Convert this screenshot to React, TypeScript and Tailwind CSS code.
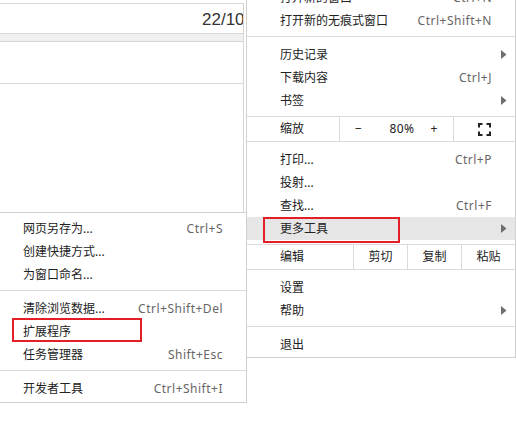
import React from 'react';

type Item = { label: string; shortcut?: string; arrow?: boolean; active?: boolean };

const Arrow: React.FC = () => (
  <svg width="6" height="9" viewBox="0 0 6 9" className="absolute right-[8px] top-[7px]">
    <path d="M0 0 L5.5 4.5 L0 9 Z" fill="#6e6e6e" />
  </svg>
);

const Row: React.FC<{ item: Item; padL: string; padR: string }> = ({ item, padL, padR }) => (
  <div
    className={`relative flex h-[23px] items-center justify-between ${padL} ${padR} ${
      item.active ? 'bg-[#e6e6e6]' : ''
    }`}
  >
    <span className="text-[#222]">{item.label}</span>
    {item.shortcut && <span className="tracking-[0.5px] text-[#666]">{item.shortcut}</span>}
    {item.arrow && <Arrow />}
  </div>
);

const Sep: React.FC = () => (
  <div className="pt-[4px] pb-[6px]">
    <div className="h-px bg-[#dadada]" />
  </div>
);

const FullscreenIcon: React.FC = () => (
  <svg width="13" height="13" viewBox="0 0 13 13" fill="none" stroke="#222" strokeWidth="2">
    <path d="M1 4.5V1h3.5M8.5 1H12v3.5M12 8.5V12H8.5M4.5 12H1V8.5" />
  </svg>
);

const App: React.FC = () => {
  const pl = 'pl-[33px]';
  const pr = 'pr-[23px]';
  const spl = 'pl-[23px]';

  return (
    <div
      className="relative h-[439px] w-[516px] overflow-hidden bg-white text-[12px]"
      style={{ fontFamily: '"Noto Sans", "Noto Sans CJK SC", sans-serif' }}
    >
      {/* page behind the menus */}
      <div className="mt-[3px] h-[240px] w-[244px] border-r border-t border-[#d6d6d6]">
        <div
          className="h-[29px] overflow-hidden whitespace-nowrap pl-[202px] pt-[7px] text-[17px] leading-none text-[#333]"
          style={{ fontFamily: '"Liberation Sans", Arial, sans-serif' }}
        >
          22/10/2020
        </div>
        <div className="h-[9px] border-y border-[#d6d6d6] bg-[#f0f0f0]" />
        <div className="h-[42px] border-b border-[#d6d6d6]" />
      </div>

      {/* main menu */}
      <div className="absolute left-[246px] top-[-19px] w-[270px] border border-[#d0d0d0] bg-white pb-[1px] pt-[4px]">
        <Row item={{ label: '打开新的窗口', shortcut: 'Ctrl+N' }} padL={pl} padR={pr} />
        <Row item={{ label: '打开新的无痕式窗口', shortcut: 'Ctrl+Shift+N' }} padL={pl} padR={pr} />
        <Sep />
        <Row item={{ label: '历史记录', arrow: true }} padL={pl} padR={pr} />
        <Row item={{ label: '下载内容', shortcut: 'Ctrl+J' }} padL={pl} padR={pr} />
        <Row item={{ label: '书签', arrow: true }} padL={pl} padR={pr} />
        <div className="mt-[4px] mb-[6px] flex h-[26px] border-y border-[#dadada]">
          <div className={`flex w-[92px] items-center ${pl} text-[#222]`}>缩放</div>
          <div className="flex w-[114px] items-center border-l border-[#dadada] tracking-[0.5px] text-[#222]">
            <span className="ml-[15px]">−</span>
            <span className="ml-[27px]">80%</span>
            <span className="ml-[16px]">+</span>
          </div>
          <div className="flex flex-1 items-center justify-center border-l border-[#dadada]">
            <FullscreenIcon />
          </div>
        </div>
        <Row item={{ label: '打印...', shortcut: 'Ctrl+P' }} padL={pl} padR={pr} />
        <Row item={{ label: '投射...' }} padL={pl} padR={pr} />
        <Row item={{ label: '查找...', shortcut: 'Ctrl+F' }} padL={pl} padR={pr} />
        <Row item={{ label: '更多工具', arrow: true, active: true }} padL={pl} padR={pr} />
        <div className="mt-[4px] mb-[6px] flex h-[26px] border-y border-[#dadada] text-[#222]">
          <div className={`flex w-[106px] items-center ${pl}`}>编辑</div>
          <div className="flex w-[54px] items-center justify-center border-l border-[#dadada]">剪切</div>
          <div className="flex w-[54px] items-center justify-center border-l border-[#dadada]">复制</div>
          <div className="flex flex-1 items-center justify-center border-l border-[#dadada]">粘贴</div>
        </div>
        <Row item={{ label: '设置' }} padL={pl} padR={pr} />
        <Row item={{ label: '帮助', arrow: true }} padL={pl} padR={pr} />
        <Sep />
        <Row item={{ label: '退出' }} padL={pl} padR={pr} />
      </div>

      {/* more tools submenu */}
      <div className="absolute left-[-1px] top-[212px] w-[248px] border border-[#d0d0d0] bg-white pb-[2px] pt-[4px]">
        <Row item={{ label: '网页另存为...', shortcut: 'Ctrl+S' }} padL={spl} padR={pr} />
        <Row item={{ label: '创建快捷方式...' }} padL={spl} padR={pr} />
        <Row item={{ label: '为窗口命名...' }} padL={spl} padR={pr} />
        <Sep />
        <Row item={{ label: '清除浏览数据...', shortcut: 'Ctrl+Shift+Del' }} padL={spl} padR={pr} />
        <Row item={{ label: '扩展程序' }} padL={spl} padR={pr} />
        <Row item={{ label: '任务管理器', shortcut: 'Shift+Esc' }} padL={spl} padR={pr} />
        <Sep />
        <Row item={{ label: '开发者工具', shortcut: 'Ctrl+Shift+I' }} padL={spl} padR={pr} />
      </div>

      {/* red highlight boxes */}
      <div className="absolute left-[263px] top-[217px] h-[26px] w-[137px] border-2 border-[#e41e26]" />
      <div className="absolute left-[12px] top-[318px] h-[24px] w-[130px] border-2 border-[#e41e26]" />
    </div>
  );
};

export default App;
